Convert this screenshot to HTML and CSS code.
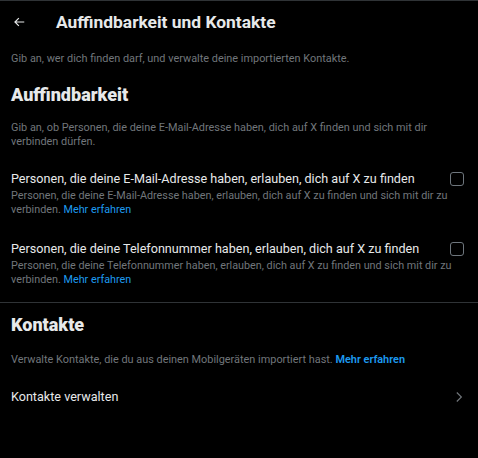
FILE: index.html
```html
<!DOCTYPE html>
<html lang="de">
<head>
    <meta charset="UTF-8">
    <meta name="viewport" content="width=device-width, initial-scale=1.0">
    <title>Auffindbarkeit und Kontakte</title>
    <link rel="stylesheet" href="styles.css">
</head>
<body>
    <div class="topbar">
        <span class="back">
            <svg viewBox="0 0 24 24" width="14" height="14"><path d="M7.414 13l5.043 5.04-1.414 1.42L3.586 12l7.457-7.46 1.414 1.42L7.414 11H21v2H7.414z"/></svg>
        </span>
        <h1>Auffindbarkeit und Kontakte</h1>
    </div>

    <p class="intro">Gib an, wer dich finden darf, und verwalte deine importierten Kontakte.</p>

    <div class="section">
        <h2>Auffindbarkeit</h2>
        <p class="desc">Gib an, ob Personen, die deine E-Mail-Adresse haben, dich auf X finden und sich mit dir verbinden dürfen.</p>

        <div class="option">
            <div class="option-head">
                <span class="label">Personen, die deine E-Mail-Adresse haben, erlauben, dich auf X zu finden</span>
                <span class="checkbox"></span>
            </div>
            <p class="hint">Personen, die deine E-Mail-Adresse haben, erlauben, dich auf X zu finden und sich mit dir zu verbinden. <a href="#">Mehr erfahren</a></p>
        </div>

        <div class="option">
            <div class="option-head">
                <span class="label">Personen, die deine Telefonnummer haben, erlauben, dich auf X zu finden</span>
                <span class="checkbox"></span>
            </div>
            <p class="hint">Personen, die deine Telefonnummer haben, erlauben, dich auf X zu finden und sich mit dir zu verbinden. <a href="#">Mehr erfahren</a></p>
        </div>
    </div>

    <div class="section contacts">
        <h2>Kontakte</h2>
        <p class="desc">Verwalte Kontakte, die du aus deinen Mobilgeräten importiert hast. <a href="#" class="strong">Mehr erfahren</a></p>

        <div class="link-row">
            <span class="label">Kontakte verwalten</span>
            <svg class="chevron" viewBox="0 0 24 24" width="14" height="14"><path d="M14.586 12L7.543 4.96l1.414-1.42L17.414 12l-8.457 8.46-1.414-1.42L14.586 12z"/></svg>
        </div>
    </div>
</body>
</html>
```

FILE: styles.css
```css
body {
    margin: 0;
    background: #000;
    color: #e7e9ea;
    font-family: Roboto, "Noto Sans", sans-serif;
    border-top: 1px solid #2f3336;
    min-height: 457px;
}
p { margin: 0; }
a { color: #1d9bf0; text-decoration: none; }
a.strong { font-weight: 600; }

.topbar {
    display: flex;
    align-items: center;
    height: 42px;
    padding: 0 12px;
}
.back { display: flex; width: 44px; }
.back svg { fill: #e7e9ea; }
.topbar h1 {
    margin: 0;
    font-size: 17.4px;
    font-weight: 700;
}

.intro {
    padding: 9px 11px 0;
    font-size: 10.9px;
    line-height: 14px;
    color: #71767b;
}

.section { padding: 0 11px; }
.section h2 {
    margin: 18px 0 0;
    font-size: 18px;
    line-height: 22px;
    font-weight: 900;
}
.desc {
    margin-top: 15px;
    font-size: 10.9px;
    line-height: 14px;
    color: #71767b;
}

.option { margin-top: 21px; }
.option + .option { margin-top: 24px; }
.option-head {
    display: flex;
    align-items: center;
    justify-content: space-between;
    gap: 12px;
}
.label { font-size: 12.6px; line-height: 17px; }
.checkbox {
    width: 12px;
    height: 12px;
    border: 1.5px solid #6e767d;
    border-radius: 3px;
    margin-right: 3px;
    flex-shrink: 0;
}
.hint {
    margin-top: 2px;
    font-size: 10.8px;
    line-height: 13.5px;
    color: #71767b;
}

.contacts {
    margin-top: 16px;
    border-top: 1px solid #2f3336;
}
.contacts h2 { margin-top: 11px; }
.contacts .desc { margin-top: 17px; }
.link-row {
    display: flex;
    align-items: center;
    justify-content: space-between;
    margin-top: 21px;
}
.chevron { fill: #71767b; margin-right: 1px; }
```
